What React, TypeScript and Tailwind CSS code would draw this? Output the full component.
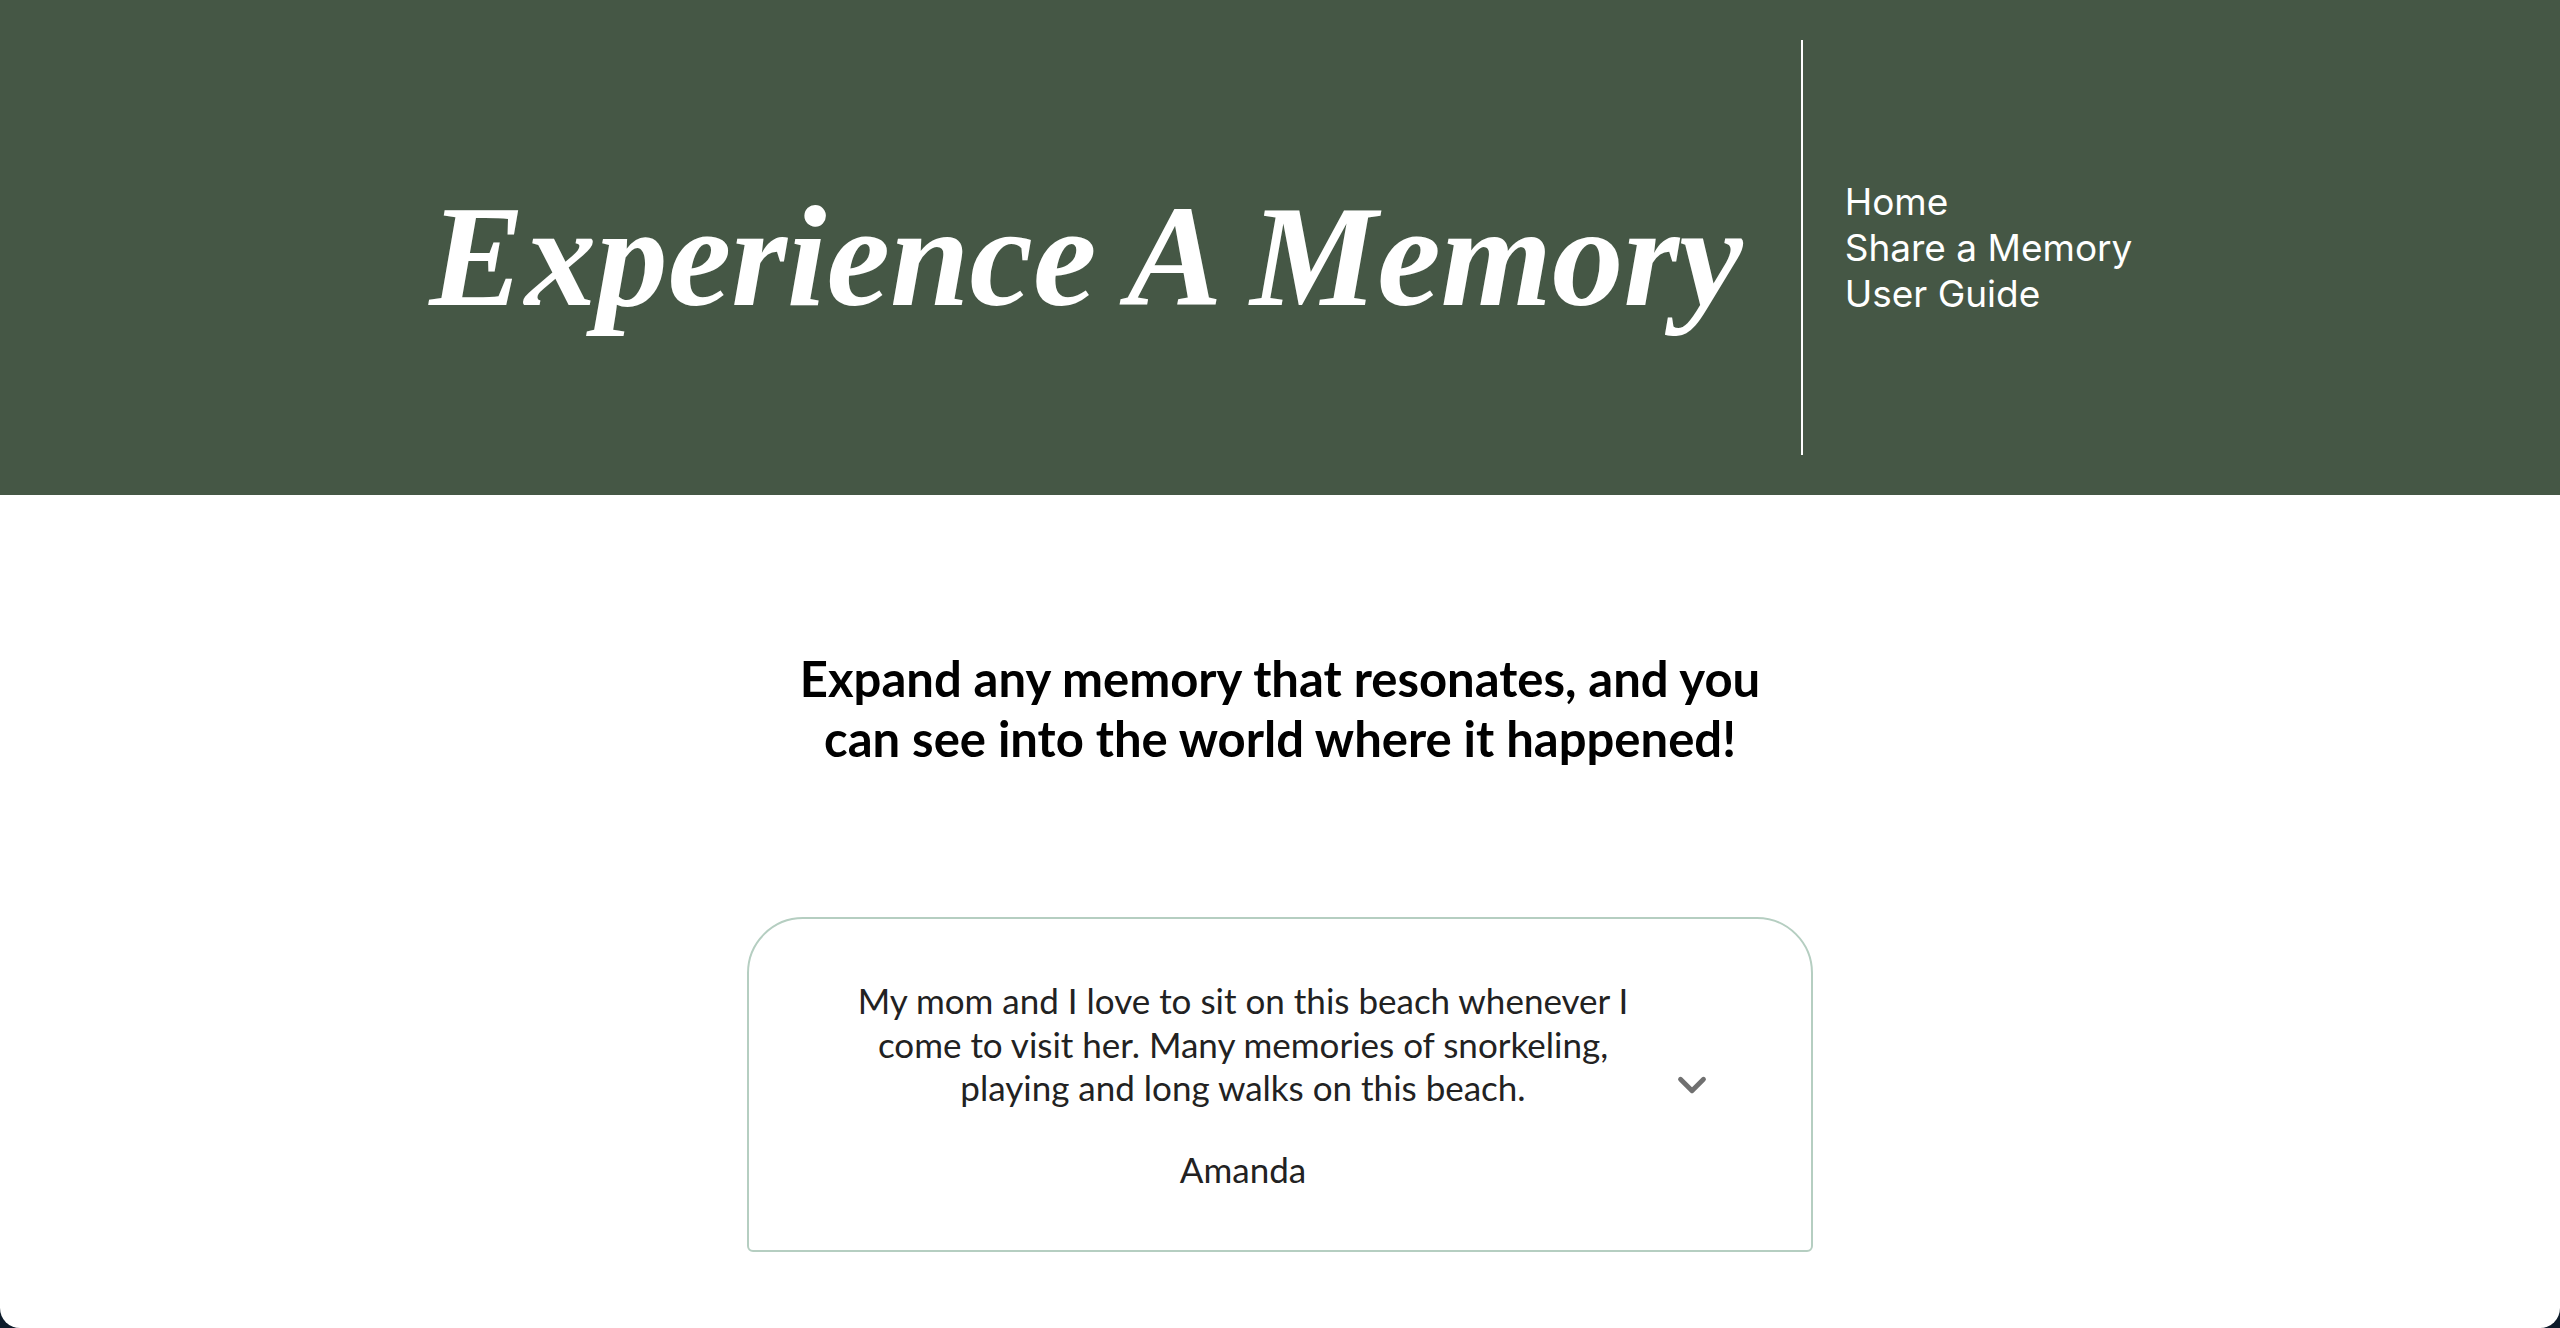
import { ChevronDown } from 'lucide-react';

const memory = {
  text: 'My mom and I love to sit on this beach whenever I come to visit her. Many memories of snorkeling, playing and long walks on this beach.',
  author: 'Amanda',
};

export default function App() {
  return (
    <div className="min-h-[1328px] bg-[#0d1b2a]">
      <div className="h-[1328px] bg-white rounded-b-[20px] overflow-hidden">

        {/* Header */}
        <header className="h-[495px] bg-[#455745] flex justify-center items-stretch py-[40px]">
          <div className="flex items-center pt-[20px] pr-[58px]">
            <h1 className="text-white italic font-bold text-[143px] leading-none whitespace-nowrap font-['Liberation_Serif',serif]">
              Experience A Memory
            </h1>
          </div>
          <div className="w-[2px] bg-white" />
          <nav className="flex flex-col justify-center pl-[42px] text-white text-[37px] leading-[46px] font-['Inter',sans-serif] w-[328px]">
            <a href="#" className="whitespace-nowrap">Home</a>
            <a href="#" className="whitespace-nowrap">Share a Memory</a>
            <a href="#" className="whitespace-nowrap">User Guide</a>
          </nav>
        </header>

        {/* Intro */}
        <main className="flex flex-col items-center pt-[153px] font-['Lato',sans-serif]">
          <h2 className="max-w-[1000px] text-center text-black font-bold text-[49px] leading-[60px]">
            Expand any memory that resonates, and you can see into the world where it happened!
          </h2>

          {/* Memory card */}
          <div className="mt-[149px] w-[1066px] border-2 border-[#b5cec1] rounded-t-[56px] rounded-b-[6px] flex items-center pl-[99px] pt-[60px] pb-[59px]">
            <div className="w-[790px] text-center text-[#222] text-[35px] leading-[43.5px]">
              <p>{memory.text}</p>
              <p className="mt-[38px]">{memory.author}</p>
            </div>
            <button className="w-[108px] flex justify-center text-[#707070]">
              <ChevronDown size={46} strokeWidth={2.5} />
            </button>
          </div>
        </main>

      </div>
    </div>
  );
}
